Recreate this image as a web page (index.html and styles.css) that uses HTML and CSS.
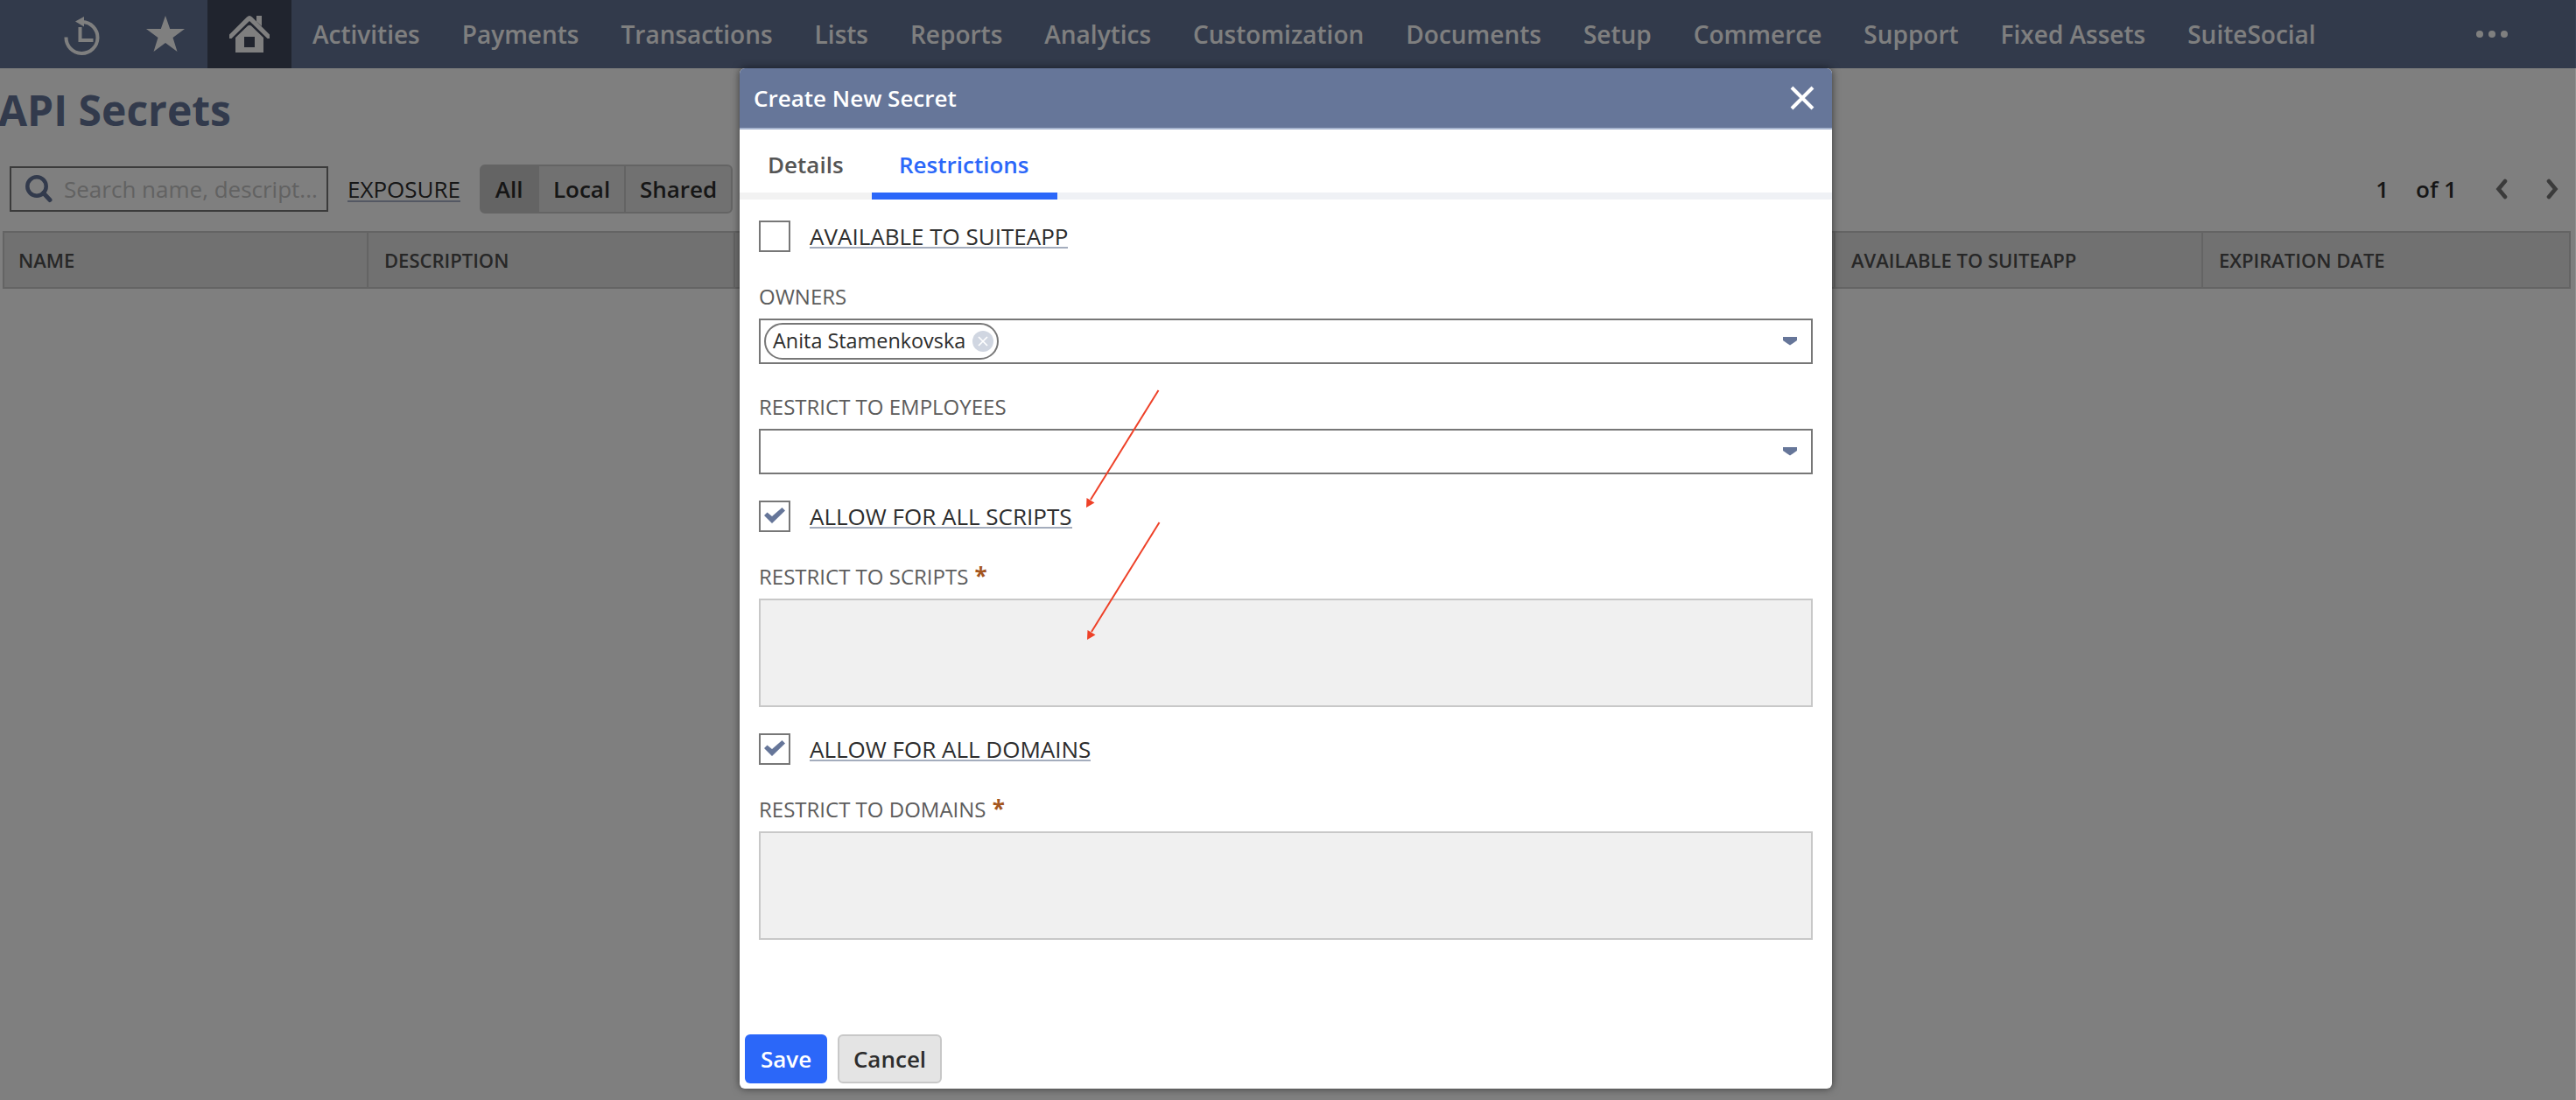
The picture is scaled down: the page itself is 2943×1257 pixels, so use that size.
FILE: index.html
```html
<!DOCTYPE html>
<html lang="en">
<head>
<meta charset="utf-8">
<title>API Secrets</title>
<link rel="stylesheet" href="styles.css">
</head>
<body>
<nav class="nav">
  <a class="nav-tile"><svg width="44" height="48" viewBox="0 0 44 48"><path d="M4.500 27.500A18 18 0 1 0 23 10" fill="none" stroke="#fff" stroke-width="4"/><path d="M15 9.500L25 4V15.500Z" fill="#fff"/><path d="M20.500 16V31H35.500" fill="none" stroke="#fff" stroke-width="4"/></svg></a>
  <a class="nav-tile"><svg width="44" height="44" viewBox="0 0 44 44"><path d="M22 1L27.200 16H44L30.500 26L35.500 42L22 32L8.500 42L13.500 26L0 16H16.800Z" fill="#fff"/></svg></a>
  <a class="nav-tile nav-tile-active"><svg width="46" height="44" viewBox="0 0 46 44"><path d="M0 22.500L20 2.500Q23 -.5 26 2.500L46 22.500V27H43.500L23 7L2.500 27H0Z" fill="#fff"/><path d="M31 1H37V13L31 7.500Z" fill="#fff"/><path fill-rule="evenodd" d="M7 26L21 12.500Q23 11 25 12.500L39 26V43H7ZM17 25V37H29V25Z" fill="#fff"/></svg></a>
  <a class="nav-item">Activities</a>
  <a class="nav-item">Payments</a>
  <a class="nav-item">Transactions</a>
  <a class="nav-item">Lists</a>
  <a class="nav-item">Reports</a>
  <a class="nav-item">Analytics</a>
  <a class="nav-item">Customization</a>
  <a class="nav-item">Documents</a>
  <a class="nav-item">Setup</a>
  <a class="nav-item">Commerce</a>
  <a class="nav-item">Support</a>
  <a class="nav-item">Fixed Assets</a>
  <a class="nav-item">SuiteSocial</a>
  <svg class="nav-more" width="36" height="8" viewBox="0 0 36 8"><g fill="#fff"><circle cx="4" cy="4" r="4"/><circle cx="18" cy="4" r="4"/><circle cx="32" cy="4" r="4"/></g></svg>
</nav>

<h1 class="title">API Secrets</h1>

<div class="toolbar">
  <div class="search">
    <svg width="32" height="32" viewBox="0 0 32 32" fill="none" stroke="#647598"><circle cx="13" cy="13" r="10.700" stroke-width="4.500"/><path d="M20.500 20.500L28 28.500" stroke-width="5" stroke-linecap="round"/></svg>
    <span>Search name, descript...</span>
  </div>
  <span class="exposure">EXPOSURE</span>
  <div class="segments">
    <span class="segment segment-all">All</span>
    <span class="segment segment-local">Local</span>
    <span class="segment segment-shared">Shared</span>
  </div>
  <div class="pager">
    <span>1</span>
    <span>of 1</span>
    <svg width="14" height="26" viewBox="0 0 14 26"><path d="M11 4L3.500 13L11 22" fill="none" stroke="#777" stroke-width="4.600" stroke-linecap="round"/></svg>
    <svg width="14" height="26" viewBox="0 0 14 26"><path d="M3 4L10.500 13L3 22" fill="none" stroke="#777" stroke-width="4.600" stroke-linecap="round"/></svg>
  </div>
</div>

<div class="table-head">
  <span class="th">NAME</span>
  <span class="th">DESCRIPTION</span>
  <span class="th"></span>
  <span class="th"></span>
  <span class="th"></span>
  <span class="th">AVAILABLE TO SUITEAPP</span>
  <span class="th">EXPIRATION DATE</span>
</div>

<div class="overlay"></div>

<section class="dialog">
  <header class="dialog-head">
    <span>Create New Secret</span>
    <svg width="28" height="28" viewBox="0 0 28 28"><path d="M2 2L26 26M26 2L2 26" stroke="#fff" stroke-width="4"/></svg>
  </header>
  <div class="tabs">
    <span class="tab tab-details">Details</span>
    <span class="tab tab-active">Restrictions</span>
  </div>
  <div class="form">
    <div class="check-row">
      <span class="checkbox"></span>
      <span class="check-label">AVAILABLE TO SUITEAPP</span>
    </div>
    <div class="label">OWNERS</div>
    <div class="select">
      <span class="pill">Anita Stamenkovska
        <svg width="24" height="24" viewBox="0 0 24 24"><circle cx="12" cy="12" r="12" fill="#d0d6e1"/><path d="M7 7L17 17M17 7L7 17" stroke="#fff" stroke-width="1.600"/></svg>
      </span>
      <svg class="caret" width="16" height="10" viewBox="0 0 16 10"><path d="M0 0H16V4Q12 7 8 9.500Q4 7 0 4Z" fill="#667699"/></svg>
    </div>
    <div class="label label-employees">RESTRICT TO EMPLOYEES</div>
    <div class="select">
      <svg class="caret" width="16" height="10" viewBox="0 0 16 10"><path d="M0 0H16V4Q12 7 8 9.500Q4 7 0 4Z" fill="#667699"/></svg>
    </div>
    <div class="check-row check-row-next">
      <span class="checkbox"><svg width="24" height="18" viewBox="0 0 24 18"><path d="M0 9L3.500 5.500L9 10L20.500 0L24 3.500L9 18Z" fill="#667699"/></svg></span>
      <span class="check-label">ALLOW FOR ALL SCRIPTS</span>
    </div>
    <div class="label">RESTRICT TO SCRIPTS <b class="required">*</b></div>
    <div class="textarea"></div>
    <div class="check-row check-row-next">
      <span class="checkbox"><svg width="24" height="18" viewBox="0 0 24 18"><path d="M0 9L3.500 5.500L9 10L20.500 0L24 3.500L9 18Z" fill="#667699"/></svg></span>
      <span class="check-label">ALLOW FOR ALL DOMAINS</span>
    </div>
    <div class="label">RESTRICT TO DOMAINS <b class="required">*</b></div>
    <div class="textarea"></div>
  </div>
  <footer class="actions">
    <button class="btn btn-save">Save</button>
    <button class="btn btn-cancel">Cancel</button>
  </footer>
</section>

<svg class="arrows" width="100" height="300" viewBox="0 0 100 300">
  <g stroke="#ee4128" stroke-width="2" fill="#ee4128">
    <path d="M93.500 6L16 131"/><path d="M93.500 6L16 131" transform="translate(1 151)"/>
    <path stroke="none" d="M11 140L11.500 129L20.500 134.500Z M12 291L12.500 280L21.500 285.500Z"/>
  </g>
</svg>
</body>
</html>
```
FILE: styles.css
```css
* { box-sizing: border-box; }
body {
  margin: 0;
  height: 1257px;
  overflow: hidden;
  position: relative;
  background: #fff;
  color: #2d2d2d;
  font: 600 26px/36px "Open Sans", sans-serif;
}
svg { display: block; flex: none; }

.nav {
  display: flex;
  align-items: center;
  height: 78px;
  padding: 0 78px 0 45px;
  background: #647497;
  color: #fff;
  font-size: 28px;
}
.nav-tile {
  display: flex;
  align-items: center;
  justify-content: center;
  width: 96px;
  height: 78px;
}
.nav-tile-active { background: #40485c; }
.nav-item { padding: 0 24px; }
.nav-more { margin-left: auto; }

.title {
  margin: 0 0 0 -2px;
  padding-top: 18px;
  height: 110px;
  color: #647598;
  font-size: 48px;
  line-height: 60px;
}

.toolbar {
  display: flex;
  align-items: center;
  height: 56px;
  padding: 0 20px 0 11px;
}
.search {
  display: flex;
  align-items: center;
  gap: 12px;
  width: 364px;
  height: 52px;
  padding-left: 16px;
  border: 2px solid #777;
  color: #c4c4c4;
  font-weight: 400;
}
.exposure {
  height: 28px;
  margin: 2px 22px 0;
  line-height: 27px;
  font-weight: 400;
  border-bottom: 2px solid #a9b1c6;
}
.segments {
  display: flex;
  width: 289px;
  height: 56px;
  border: 2px solid #c8c8c8;
  border-radius: 6px;
  background: #e3e3e3;
  line-height: 52px;
  text-align: center;
}
.segment-all { width: 66px; padding-right: 3px; background: #c8c8c8; }
.segment-local { width: 99px; border-right: 2px solid #c8c8c8; }
.segment-shared { flex: 1; }
.pager {
  display: flex;
  align-items: center;
  margin-left: auto;
}
.pager span:nth-child(2) { margin: 0 44px 0 31px; }
.pager svg:last-child { margin-left: 44px; }

.table-head {
  display: grid;
  grid-template-columns: 418px repeat(4, 419px) 420px 1fr;
  height: 66px;
  margin: 20px 6px 0 3px;
  border: solid #c8c8c8;
  border-width: 2px 0;
  background: #e3e3e3;
  color: #4f4f4f;
  font-size: 22px;
  line-height: 63px;
}
.th { padding-left: 18px; border-right: 2px solid #c8c8c8; }
.th:first-child { padding-left: 16px; border-left: 2px solid #c8c8c8; }

.overlay {
  position: absolute;
  inset: 0;
  background: rgba(0, 0, 0, .5);
  background-clip: padding-box;
  border-right: 1px solid rgba(0, 0, 0, .43);
}

.dialog {
  position: absolute;
  left: 845px;
  top: 78px;
  width: 1248px;
  height: 1166px;
  display: flex;
  flex-direction: column;
  overflow: hidden;
  border-radius: 6px;
  background: #fff;
  box-shadow: 0 0 10px rgba(0, 0, 0, .55);
}
.dialog-head {
  display: flex;
  align-items: center;
  justify-content: space-between;
  height: 70px;
  padding: 0 20px 0 16px;
  background: #667699;
  border-bottom: 2px solid #a6b4ce;
  color: #fff;
}
.tabs {
  display: flex;
  height: 80px;
  border-bottom: 8px solid #eff1f5;
  line-height: 80px;
}
.tab { height: 80px; padding: 0 31px; }
.tab-details { width: 151px; padding-left: 32px; color: #555; border-bottom: 8px solid #f2f2f2; }
.tab-active { width: 212px; color: #2b67f9; border-bottom: 8px solid #2b67f9; }

.form { flex: 1; padding: 24px 22px 0; }
.check-row { display: flex; gap: 22px; font-weight: 400; }
.check-row-next { margin-top: 30px; }
.checkbox {
  display: flex;
  align-items: center;
  justify-content: center;
  width: 36px;
  height: 36px;
  padding-bottom: 2px;
  border: 2px solid #777;
}
.check-label {
  height: 27px;
  margin-top: 5px;
  line-height: 26px;
  border-bottom: 2px solid #a4adbd;
}
.label {
  margin: 35px 0 9px;
  color: #5c5c5c;
  font-size: 24px;
  font-weight: 400;
  line-height: 32px;
}
.label-employees { margin-top: 33px; }
.required {
  margin-left: 1px;
  color: #a4561f;
  font-size: 26px;
  line-height: 1;
}
.select {
  display: flex;
  align-items: center;
  height: 52px;
  padding: 0 16px 0 4px;
  border: 2px solid #777;
}
.pill {
  display: flex;
  align-items: center;
  justify-content: space-between;
  width: 268px;
  height: 42px;
  padding: 0 4px 2px 8px;
  border: 2px solid #777;
  border-radius: 21px;
  font-size: 23.4px;
  font-weight: 400;
  white-space: nowrap;
}
.pill svg { margin-top: 2px; }
.caret { margin-left: auto; }
.textarea {
  height: 124px;
  border: 2px solid #c8c8c8;
  background: #f0f0f0;
}
.actions { display: flex; gap: 12px; padding: 0 6px 6px; }
.btn {
  height: 56px;
  padding: 0;
  border: 0;
  border-radius: 6px;
  font: inherit;
}
.btn-save { width: 94px; background: #2b67f9; color: #fff; }
.btn-cancel { width: 119px; border: 2px solid #c8c8c8; background: #e4e4e4; color: #2d2d2d; }

.arrows { position: absolute; left: 1230px; top: 440px; }
```
